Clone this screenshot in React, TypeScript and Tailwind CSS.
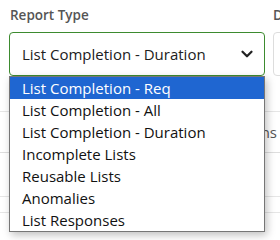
import { ChevronDown } from 'lucide-react';

const OPTIONS = [
  'List Completion - Req',
  'List Completion - All',
  'List Completion - Duration',
  'Incomplete Lists',
  'Reusable Lists',
  'Anomalies',
  'List Responses',
];

export default function App() {
  return (
    <div className="h-[240px] w-[280px] overflow-hidden bg-white font-['Open_Sans',sans-serif]">
      <div className="flex gap-2 pl-[9px] pt-[4px]">
        <div className="relative w-[256px] shrink-0">
          <div className="pl-px text-[13.5px] font-semibold leading-[22px] text-[#555]">Report Type</div>
          <div className="mt-[6px] flex h-[44px] items-center justify-between rounded-[4px] border border-[#3d8b2f] bg-white pl-[12px] pr-[8px]">
            <span className="text-[15px] text-[#212121]">List Completion - Duration</span>
            <ChevronDown size={18} strokeWidth={3} className="text-[#222]" />
          </div>
          {/* native select popup, open */}
          <ul className="absolute left-0 top-[72px] z-10 w-[256px] border border-[#767676] bg-white shadow-[2px_3px_8px_rgba(0,0,0,0.25)]">
            {OPTIONS.map((o, i) => (
              <li
                key={o}
                className={
                  i === 0
                    ? 'h-[22px] bg-[#1f66d1] pl-[12px] text-[15px] leading-[22px] text-white'
                    : 'h-[22px] pl-[12px] text-[15px] leading-[22px] text-[#111]'
                }
              >
                {o}
              </li>
            ))}
          </ul>
        </div>
        <div className="shrink-0">
          <div className="text-[13.5px] font-semibold leading-[22px] text-[#555]">Date Range</div>
          <div className="mt-[6px] h-[44px] w-[120px] rounded-[4px] border border-[#ddd] bg-white" />
        </div>
      </div>

      {/* table behind the popup */}
      <div className="h-[36px] border-b border-[#e6e6e6]" />
      <div className="flex h-[41px] items-center justify-end border-b border-[#dedede] pr-[3px] text-[15px] text-[#555]">
        Questions
      </div>
      <div className="h-[44px] border-b border-[#e6e6e6]" />
      <div className="h-[16px] border-b border-[#e6e6e6]" />
    </div>
  );
}
